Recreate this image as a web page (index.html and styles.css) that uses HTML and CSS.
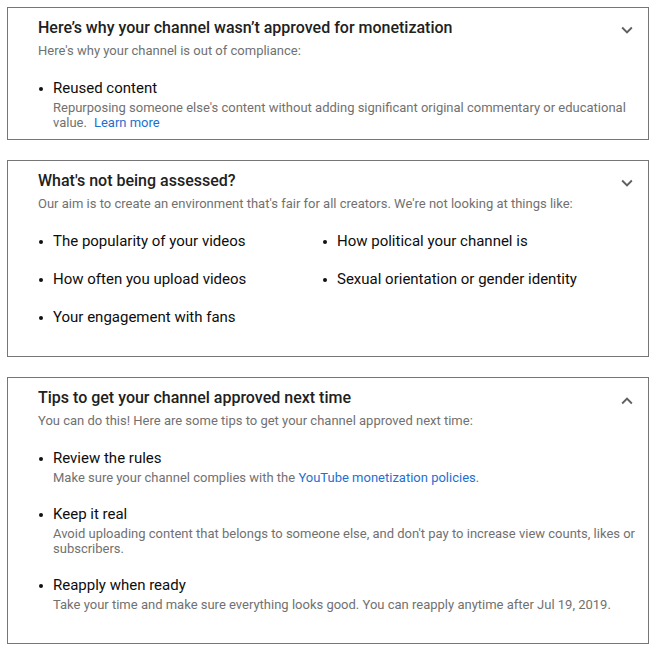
FILE: index.html
```html
<!DOCTYPE html>
<html lang="en">
<head>
<meta charset="utf-8">
<title>Monetization status</title>
<link rel="stylesheet" href="styles.css">
</head>
<body>
<div class="page">
  <section class="card card--tight">
    <div class="card__head">
      <div class="card__text">
        <h2 class="card__title">Here’s why your channel wasn’t approved for monetization</h2>
        <p class="card__sub">Here's why your channel is out of compliance:</p>
      </div>
      <svg class="chev" viewBox="0 0 24 24" aria-hidden="true"><path d="M16.59 8.59L12 13.17 7.41 8.59 6 10l6 6 6-6z"/></svg>
    </div>
    <ul class="list">
      <li class="item">
        <div class="item__title">Reused content</div>
        <p class="item__desc">Repurposing someone else's content without adding significant original commentary or educational value.<a class="link link--gap" href="#">Learn more</a></p>
      </li>
    </ul>
  </section>

  <section class="card card--grid">
    <div class="card__head">
      <div class="card__text">
        <h2 class="card__title">What's not being assessed?</h2>
        <p class="card__sub">Our aim is to create an environment that's fair for all creators. We're not looking at things like:</p>
      </div>
      <svg class="chev" viewBox="0 0 24 24" aria-hidden="true"><path d="M16.59 8.59L12 13.17 7.41 8.59 6 10l6 6 6-6z"/></svg>
    </div>
    <ul class="list list--grid">
      <li class="item"><div class="item__title">The popularity of your videos</div></li>
      <li class="item"><div class="item__title">How political your channel is</div></li>
      <li class="item"><div class="item__title">How often you upload videos</div></li>
      <li class="item"><div class="item__title">Sexual orientation or gender identity</div></li>
      <li class="item"><div class="item__title">Your engagement with fans</div></li>
    </ul>
  </section>

  <section class="card">
    <div class="card__head">
      <div class="card__text">
        <h2 class="card__title">Tips to get your channel approved next time</h2>
        <p class="card__sub">You can do this! Here are some tips to get your channel approved next time:</p>
      </div>
      <svg class="chev chev--up" viewBox="0 0 24 24" aria-hidden="true"><path d="M12 8l-6 6 1.41 1.41L12 10.83l4.59 4.58L18 14z"/></svg>
    </div>
    <ul class="list">
      <li class="item">
        <div class="item__title">Review the rules</div>
        <p class="item__desc">Make sure your channel complies with the <a class="link" href="#">YouTube monetization policies</a>.</p>
      </li>
      <li class="item">
        <div class="item__title">Keep it real</div>
        <p class="item__desc">Avoid uploading content that belongs to someone else, and don't pay to increase view counts, likes or subscribers.</p>
      </li>
      <li class="item">
        <div class="item__title">Reapply when ready</div>
        <p class="item__desc">Take your time and make sure everything looks good. You can reapply anytime after Jul 19, 2019.</p>
      </li>
    </ul>
  </section>
</div>
</body>
</html>
```

FILE: styles.css
```css
* { box-sizing: border-box; }

html, body {
  margin: 0;
  padding: 0;
  background: #ffffff;
}

body {
  font-family: Roboto, "Liberation Sans", Arial, sans-serif;
  color: #0d0d0d;
}

.page {
  padding: 7px 5px 7px 7px;
  display: flex;
  flex-direction: column;
  gap: 20px;
}

.card {
  border: 1px solid #767676;
  padding: 10px 10px 31px 30px;
  background: #fff;
}

.card--tight {
  padding-bottom: 9px;
}

.card--grid {
  padding-bottom: 29px;
}

.card__head {
  display: flex;
  align-items: flex-start;
}

.card__text {
  flex: 1;
  min-width: 0;
}

.card__title {
  margin: 0;
  font-size: 16px;
  line-height: 20px;
  font-weight: 500;
  color: #212121;
}

.card__sub {
  margin: 5px 0 0;
  font-size: 13px;
  line-height: 16px;
  color: #717171;
}

.chev {
  width: 22px;
  height: 22px;
  flex: none;
  margin-top: 1px;
  fill: #606060;
}

.chev--up {
  margin-top: 2px;
}

.list {
  list-style: none;
  margin: 19px 0 0;
  padding: 0;
  display: flex;
  flex-direction: column;
  gap: 19px;
}

.list--grid {
  display: grid;
  grid-template-columns: 284px 1fr;
  column-gap: 0;
  row-gap: 18px;
}

.item {
  position: relative;
  padding-left: 15px;
}

.item::before {
  content: "";
  position: absolute;
  left: 1px;
  top: 9px;
  width: 4px;
  height: 4px;
  border-radius: 50%;
  background: #111;
}

.item__title {
  font-size: 15px;
  line-height: 20px;
  color: #0d0d0d;
}

.item__desc {
  margin: 2px 0 0;
  font-size: 13px;
  line-height: 15px;
  color: #717171;
}

.link {
  color: #1f6fd0;
  text-decoration: none;
}

.link--gap {
  margin-left: 7px;
}
```
